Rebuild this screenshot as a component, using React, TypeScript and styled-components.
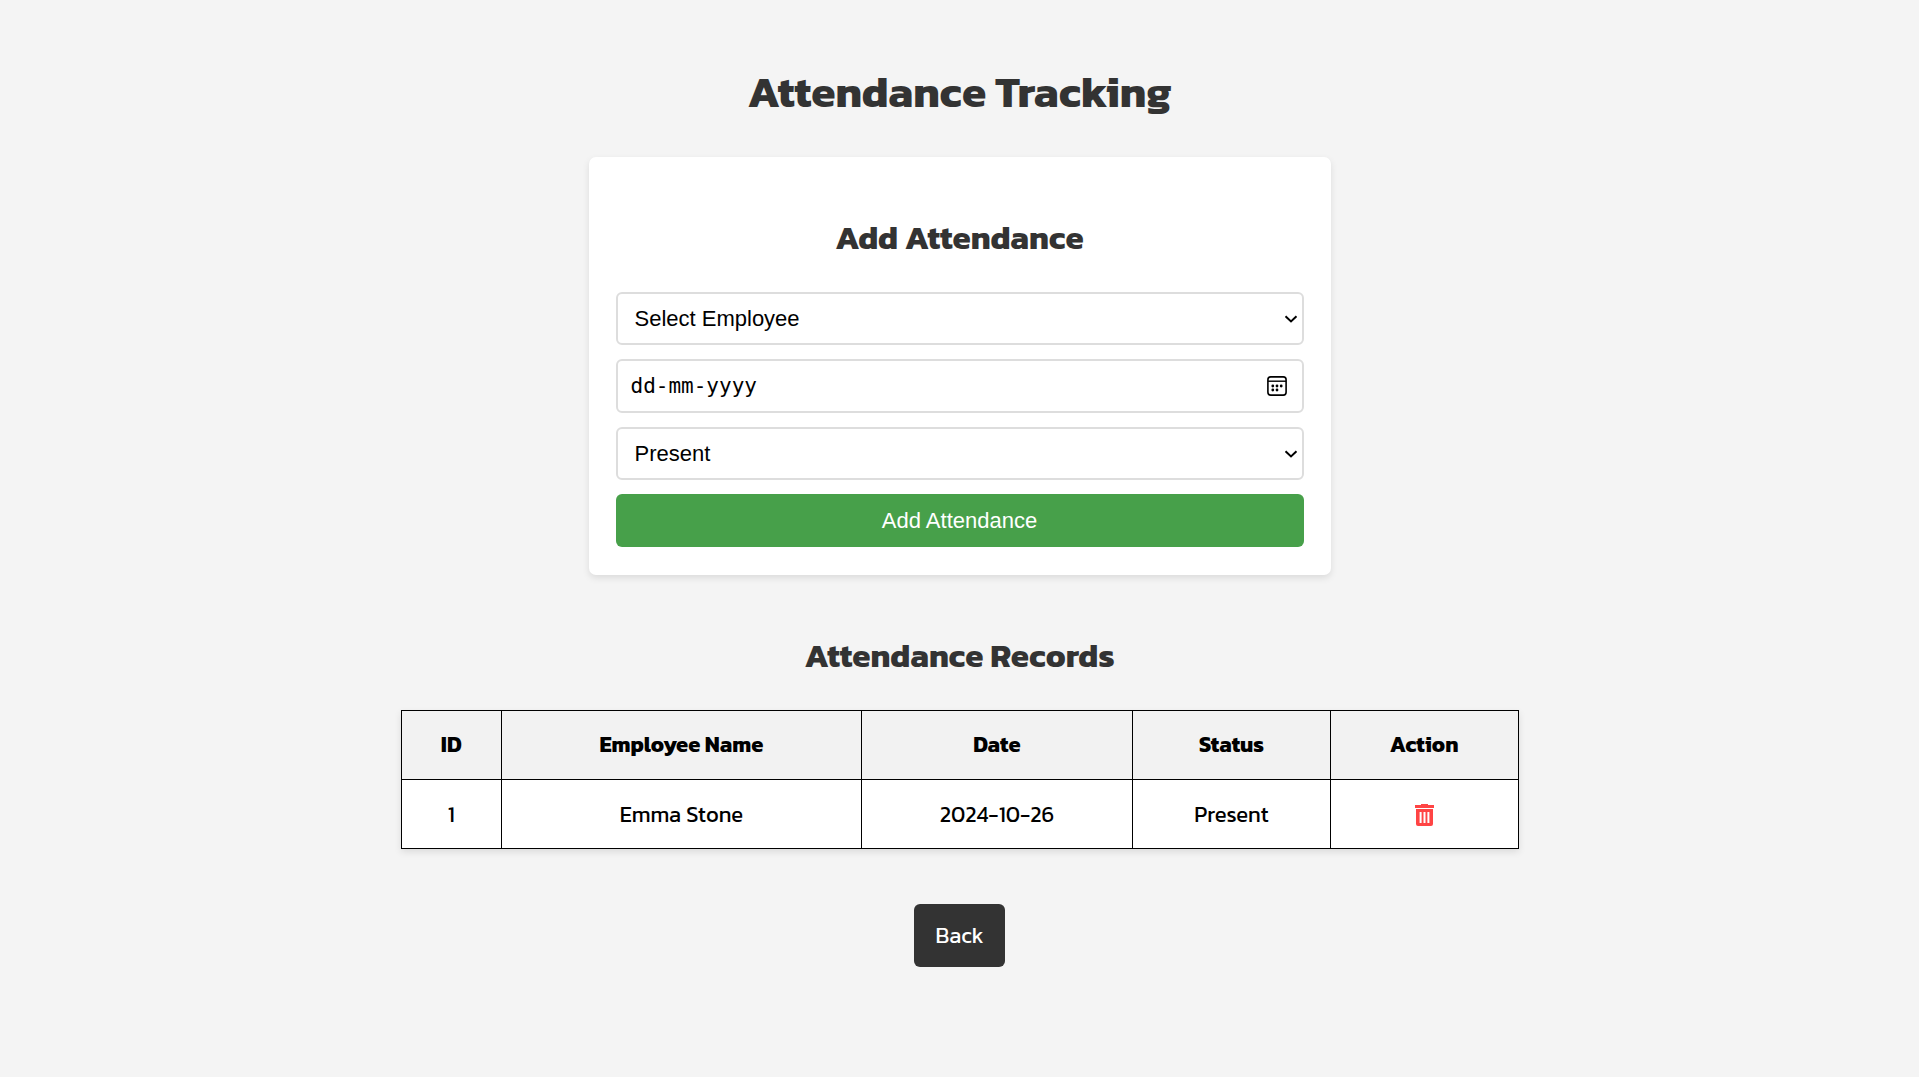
import React, { useState } from "react";
import styled, { createGlobalStyle } from "styled-components";

const GlobalStyle = createGlobalStyle`
  *, *::before, *::after { box-sizing: border-box; }
  body {
    margin: 0;
    background: #f4f4f4;
    color: #000;
    font-family: Kanit, "Noto Sans", sans-serif;
    font-size: 22px;
  }
`;

const Page = styled.main`
  display: flex;
  flex-direction: column;
  align-items: center;
  padding: 59px 27px;
`;

const Title = styled.h1`
  margin: 0 0 32px;
  color: #333;
  font-size: 44px;
  line-height: 66px;
  font-weight: 700;
  text-align: center;
`;

const Heading = styled.h2`
  margin: 27px 0;
  color: #333;
  font-size: 33px;
  line-height: 54px;
  font-weight: 700;
  text-align: center;
`;

const Card = styled.section`
  width: 100%;
  max-width: 742px;
  padding: 27px 27px 28px;
  border-radius: 7px;
  background: #fff;
  box-shadow: 0 3px 7px rgba(0, 0, 0, 0.1);
`;

const Form = styled.form`
  display: flex;
  flex-direction: column;
  gap: 14px;
`;

const fieldFont = `"Liberation Sans", Arial, sans-serif`;
const chevron = `url("data:image/svg+xml,%3Csvg xmlns='http://www.w3.org/2000/svg' width='14' height='8' viewBox='0 0 14 8'%3E%3Cpath d='M1.5 1.2 7 6.4 12.5 1.2' fill='none' stroke='%23000' stroke-width='2'/%3E%3C/svg%3E")`;

const Select = styled.select`
  appearance: none;
  height: 53px;
  padding: 0 27px 0 17px;
  border: 2px solid #ddd;
  border-radius: 6px;
  background: #fff ${chevron} no-repeat right 4px center;
  color: #000;
  font: 22px ${fieldFont};
`;

const DateField = styled.div`
  display: flex;
  align-items: center;
  height: 54px;
  padding: 0 15px 0 13px;
  border: 2px solid #ddd;
  border-radius: 6px;
  background: #fff;
`;

const DateInput = styled.input`
  flex: 1;
  min-width: 0;
  padding: 0;
  border: 0;
  outline: 0;
  background: transparent;
  font: 21px "DejaVu Sans Mono", monospace;
  &::placeholder { color: #000; opacity: 1; }
`;

const IconButton = styled.button`
  display: flex;
  padding: 0;
  border: 0;
  background: transparent;
  color: #000;
  cursor: pointer;
`;

const DeleteButton = styled(IconButton)`
  margin: 0 auto;
  color: #ff4444;
`;

const Submit = styled.button`
  height: 53px;
  border: 0;
  border-radius: 6px;
  background: #47a04a;
  color: #fff;
  font: 22px ${fieldFont};
  cursor: pointer;
`;

const Records = styled.section`
  display: flex;
  flex-direction: column;
  width: 100%;
  max-width: 1118px;
  margin-top: 27px;
`;

const Table = styled.table`
  width: 100%;
  table-layout: fixed;
  border-collapse: collapse;
  background: #fff;
  box-shadow: 0 3px 7px rgba(0, 0, 0, 0.1);
  text-align: center;
`;

const Column = styled.col<{ $share: number }>`
  width: ${(p) => p.$share}%;
`;

const HeadCell = styled.th`
  padding: 18px;
  border: 1px solid #000;
  background: #f2f2f2;
  font-weight: 700;
  line-height: 32px;
`;

const Cell = styled.td`
  padding: 18px 18px 17px;
  border: 1px solid #000;
  line-height: 33px;
`;

const BackLink = styled.a`
  margin-top: 55px;
  padding: 15px 21px;
  border-radius: 6px;
  background: #333;
  color: #fff;
  line-height: 33px;
  text-decoration: none;
`;

const CalendarIcon = () => (
  <svg width="20" height="20" viewBox="0 0 20 20" aria-hidden="true">
    <rect x="0.9" y="0.9" width="18.2" height="18.2" rx="2.8" fill="none" stroke="currentColor" strokeWidth="1.6" />
    <path d="M1 5.2h18" stroke="currentColor" strokeWidth="1.4" />
    <g fill="currentColor">
      <circle cx="5.8" cy="10" r="1.4" />
      <circle cx="10" cy="10" r="1.4" />
      <circle cx="14.2" cy="10" r="1.4" />
      <circle cx="5.8" cy="14" r="1.4" />
      <circle cx="10" cy="14" r="1.4" />
    </g>
  </svg>
);

const TrashIcon = () => (
  <svg width="19" height="22" viewBox="0 0 19 22" aria-hidden="true">
    <path
      fill="currentColor"
      fillRule="evenodd"
      d="M6 0h7v1h6v3H0V1h6zM1 5h17v15a2 2 0 0 1-2 2H3a2 2 0 0 1-2-2zM4.600 8v11h2V8zM8.500 8v11h2V8zM12.400 8v11h2V8z"
    />
  </svg>
);

const columns = [
  { label: "ID", share: 9 },
  { label: "Employee Name", share: 32.2 },
  { label: "Date", share: 24.3 },
  { label: "Status", share: 17.7 },
  { label: "Action", share: 16.8 },
];

const initialRecords = [{ id: 1, name: "Emma Stone", date: "2024-10-26", status: "Present" }];

export default function App() {
  const [records, setRecords] = useState(initialRecords);
  const [date, setDate] = useState("");

  return (
    <>
      <GlobalStyle />
      <Page>
        <Title>Attendance Tracking</Title>
        <Card>
          <Heading>Add Attendance</Heading>
          <Form onSubmit={(e) => e.preventDefault()}>
            <Select aria-label="Employee" defaultValue="">
              <option value="">Select Employee</option>
              <option>Emma Stone</option>
            </Select>
            <DateField>
              <DateInput
                aria-label="Date"
                placeholder="dd-mm-yyyy"
                value={date}
                onChange={(e) => setDate(e.target.value)}
              />
              <IconButton type="button" aria-label="Choose date">
                <CalendarIcon />
              </IconButton>
            </DateField>
            <Select aria-label="Status" defaultValue="Present">
              <option>Present</option>
              <option>Absent</option>
            </Select>
            <Submit type="submit">Add Attendance</Submit>
          </Form>
        </Card>
        <Records>
          <Heading>Attendance Records</Heading>
          <Table>
            <colgroup>
              {columns.map((c) => (
                <Column key={c.label} $share={c.share} />
              ))}
            </colgroup>
            <thead>
              <tr>
                {columns.map((c) => (
                  <HeadCell key={c.label} scope="col">{c.label}</HeadCell>
                ))}
              </tr>
            </thead>
            <tbody>
              {records.map((r) => (
                <tr key={r.id}>
                  <Cell>{r.id}</Cell>
                  <Cell>{r.name}</Cell>
                  <Cell>{r.date}</Cell>
                  <Cell>{r.status}</Cell>
                  <Cell>
                    <DeleteButton
                      type="button"
                      aria-label="Delete record"
                      onClick={() => setRecords(records.filter((x) => x.id !== r.id))}
                    >
                      <TrashIcon />
                    </DeleteButton>
                  </Cell>
                </tr>
              ))}
            </tbody>
          </Table>
        </Records>
        <BackLink href="#">Back</BackLink>
      </Page>
    </>
  );
}
